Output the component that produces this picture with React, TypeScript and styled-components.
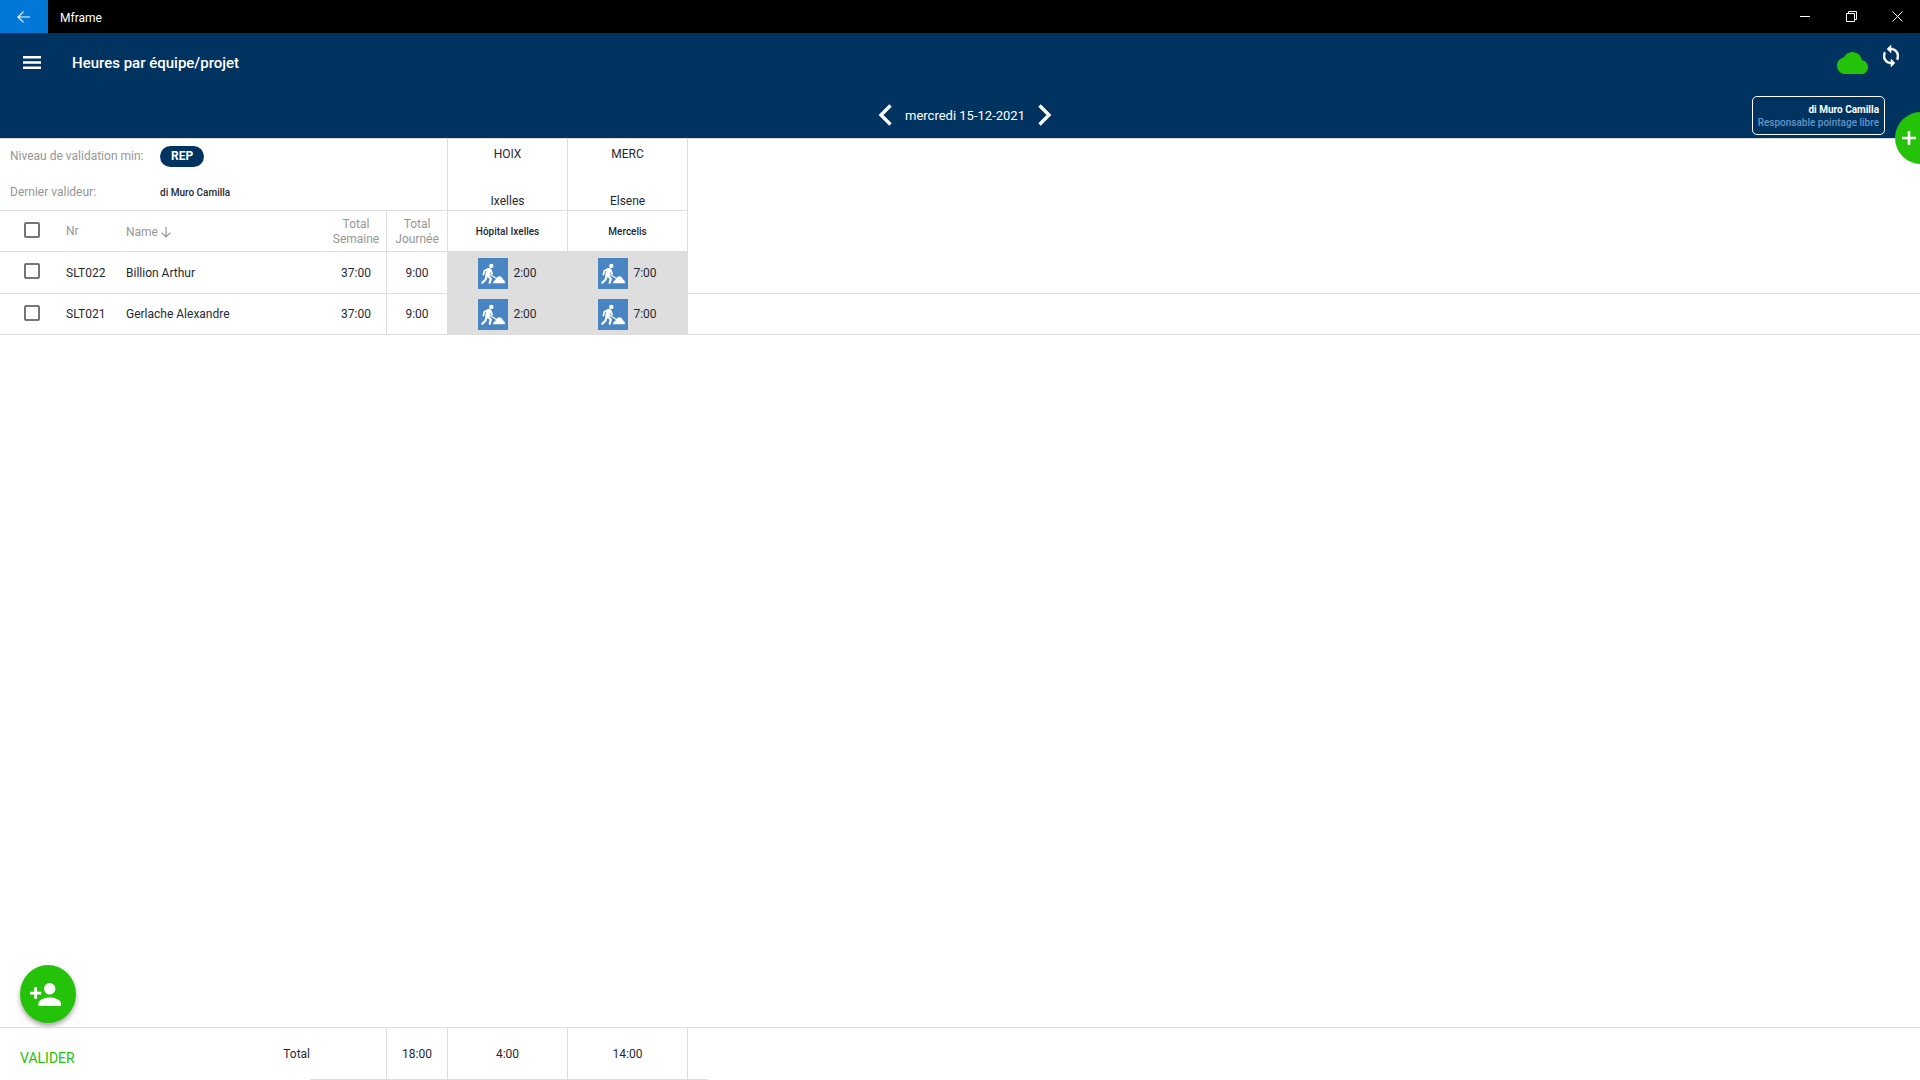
import React from 'react';
import styled, { createGlobalStyle } from 'styled-components';

const navy = '#00335f';
const green = '#25c20a';
const line = '#dedede';
const grey = '#969696';
const ink = '#1f2933';

const GlobalStyle = createGlobalStyle`
  * { box-sizing: border-box; }
  body { margin: 0; background: #fff; color: ${ink}; font: 12px/15px Roboto, "Noto Sans", sans-serif; }
  button { border: 0; padding: 0; margin: 0; background: none; color: inherit; font: inherit; cursor: pointer; }
`;

const Page = styled.div`
  min-height: 100vh;
  display: flex;
  flex-direction: column;
  overflow-x: hidden;
`;

const TitleBar = styled.div`
  height: 33px;
  display: flex;
  align-items: center;
  background: #000;
  color: #fff;
`;

const BackButton = styled.button`
  width: 48px;
  height: 33px;
  display: grid;
  place-items: center;
  background: #0178d7;
`;

const AppName = styled.span`
  flex: 1;
  padding: 3px 12px 0;
`;

const WindowButton = styled.button`
  width: 46px;
  height: 33px;
  display: grid;
  place-items: center;
`;

const Header = styled.header`
  position: relative;
  height: 105px;
  display: flex;
  flex-direction: column;
  background: ${navy};
  color: #fff;
`;

const HeaderRow = styled.div`
  height: 58px;
  display: flex;
  align-items: center;
  padding-right: 21px;
`;

const MenuButton = styled.button`
  width: 64px;
  height: 58px;
  display: grid;
  place-items: center;
`;

const Title = styled.h1`
  flex: 1;
  margin: 0;
  padding: 2px 0 0 8px;
  font-size: 15px;
  line-height: 20px;
  font-weight: 500;
`;

const HeaderIcons = styled.div`
  height: 34px;
  display: flex;
  align-items: flex-start;
  gap: 15px;
`;

const CloudMark = styled.span`
  display: block;
  padding-top: 7px;
  svg { display: block; }
`;

const IconButton = styled.button`
  display: block;
  svg { display: block; }
`;

const DateRow = styled.div`
  height: 47px;
  padding: 1px 35px 0 0;
  display: grid;
  grid-template-columns: 1fr auto 1fr;
  align-items: center;
`;

const DatePicker = styled.div`
  grid-column: 2;
  display: flex;
  align-items: center;
  gap: 13px;
  padding-left: 45px;
  font-size: 13px;
`;

const UserBox = styled.div`
  grid-column: 3;
  justify-self: end;
  padding: 6px 5px 5px;
  border: 1px solid #fff;
  border-radius: 5px;
  text-align: right;
  font-size: 10px;
  line-height: 13px;
  font-weight: 500;
  color: #6294c6;
`;

const UserName = styled.div`
  color: #fff;
  font-weight: 700;
`;

const AddButton = styled.button`
  position: absolute;
  right: -27px;
  bottom: -26px;
  width: 52px;
  height: 52px;
  padding-left: 4px;
  border-radius: 50%;
  background: ${green};
  z-index: 2;
  svg { display: block; }
`;

const Main = styled.main`
  flex: 1;
  display: flex;
  flex-direction: column;
`;

const HoursTable = styled.table`
  width: 100%;
  table-layout: fixed;
  border-collapse: separate;
  border-spacing: 0;
  border-top: 1px solid ${line};
`;

const Col = styled.col<{ $w?: number }>`
  width: ${p => (p.$w ? `${p.$w}px` : 'auto')};
`;

const Row = styled.tr<{ $h: number }>`
  height: ${p => p.$h}px;
`;

type CellProps = { $align?: string; $right?: boolean; $bottom?: boolean; $muted?: boolean; $filled?: boolean };

const cell = (p: CellProps) => `
  padding: 1px 0 0;
  font-weight: 400;
  text-align: ${p.$align || 'left'};
  border-right: 1px solid ${p.$right ? line : 'transparent'};
  border-bottom: 1px solid ${p.$bottom === false ? 'transparent' : line};
  color: ${p.$muted ? grey : ink};
  background: ${p.$filled ? line : 'transparent'};
`;

const Th = styled.th<CellProps>`${cell}`;
const Td = styled.td<CellProps>`${cell}`;

const Summary = styled.dl`
  height: 70px;
  margin: 0;
  padding: 5px 10px 0;
  display: grid;
  grid-template-columns: 150px 1fr;
  grid-template-rows: 22px 22px;
  row-gap: 14px;
  align-items: center;
`;

const Term = styled.dt`
  padding-top: 1px;
  color: ${grey};
`;

const Value = styled.dd`
  margin: 0;
  font-size: 10px;
  font-weight: 500;
`;

const Level = styled.span`
  display: inline-block;
  padding: 0 11px;
  border-radius: 11px;
  background: ${navy};
  color: #fff;
  font-size: 12px;
  line-height: 21px;
  font-weight: 700;
`;

const Project = styled.div`
  height: 70px;
  padding: 7px 0 1px;
  display: flex;
  flex-direction: column;
  justify-content: space-between;
`;

const Site = styled.span`
  font-size: 10px;
  font-weight: 500;
`;

const Check = styled.input`
  appearance: none;
  display: block;
  width: 16px;
  height: 16px;
  margin: 0 0 4px 24px;
  border: 2px solid #757575;
  border-radius: 2px;
  background: #fff;
  &:checked { background: ${green}; }
`;

const SortButton = styled.button`
  display: flex;
  align-items: center;
  gap: 3px;
  padding-top: 1px;
`;

const Work = styled.div`
  display: flex;
  align-items: center;
  justify-content: center;
  gap: 5px;
  svg { display: block; }
`;

const FabBar = styled.div`
  margin-top: auto;
  padding: 0 20px 4px;
`;

const Fab = styled.button`
  width: 56px;
  height: 58px;
  padding-right: 5px;
  display: grid;
  place-items: center;
  border-radius: 50%;
  background: ${green};
  box-shadow: 0 3px 5px rgba(0, 0, 0, 0.35);
`;

const Footer = styled.footer`
  height: 53px;
  display: flex;
  border-top: 1px solid ${line};
`;

const ValidateArea = styled.div`
  width: 310px;
  padding-left: 20px;
  display: flex;
  justify-content: space-between;
  align-items: center;
`;

const ValidateButton = styled.button`
  padding-top: 8px;
  color: ${green};
  font-size: 14px;
  line-height: 18px;
`;

const Totals = styled.div`
  display: flex;
  border-bottom: 1px solid ${line};
  padding-right: 20px;
`;

const Total = styled.output<{ $w: number }>`
  width: ${p => p.$w}px;
  padding-top: 1px;
  display: grid;
  place-items: center;
  border-right: 1px solid ${line};
`;

const WorkerIcon = () => (
  <svg width="30" height="31" viewBox="0 0 30 31" role="img" aria-label="Chantier">
    <rect width="30" height="31" fill="#4985c3" />
    <g fill="none" stroke="#fff" strokeLinecap="round" strokeLinejoin="round">
      <path d="M10.800 12 9.400 17" strokeWidth="4.400" />
      <path d="M10 11 6.400 12.800 5.400 16.600" strokeWidth="1.800" />
      <path d="M8.600 18 7.600 21.500 4.300 24.800" strokeWidth="2.200" />
      <path d="M10 17.500 12.800 20.800 11.700 24.800" strokeWidth="2.200" />
      <path d="M12.400 11.500 14 15.600" strokeWidth="2" />
      <path d="M8.200 14 18.500 20.600" strokeWidth="1.200" />
    </g>
    <circle cx="13.300" cy="7.900" r="2.200" fill="#fff" />
    <path d="M14.800 25.300Q15.800 22.600 17.600 21.600 19 18.200 21.600 18.200 24 18.200 24.800 21 27 22.400 27.200 25.300z" fill="#fff" />
  </svg>
);

const projects = [
  { code: 'HOIX', city: 'Ixelles', site: 'Hôpital Ixelles', total: '4:00' },
  { code: 'MERC', city: 'Elsene', site: 'Mercelis', total: '14:00' },
];

const people = [
  { nr: 'SLT022', name: 'Billion Arthur', week: '37:00', day: '9:00', hours: ['2:00', '7:00'], h: 42 },
  { nr: 'SLT021', name: 'Gerlache Alexandre', week: '37:00', day: '9:00', hours: ['2:00', '7:00'], h: 41 },
];

export default function App() {
  return (
    <Page>
      <GlobalStyle />
      <TitleBar>
        <BackButton aria-label="Retour">
          <svg width="14" height="12" viewBox="0 0 14 12" fill="none" stroke="#fff" strokeWidth="1.2"><path d="M13 6H1M6.500.6 1 6l5.500 5.400" /></svg>
        </BackButton>
        <AppName>Mframe</AppName>
        <WindowButton aria-label="Réduire">
          <svg width="10" height="10" viewBox="0 0 10 10" stroke="#fff"><path d="M0 4.500h10" /></svg>
        </WindowButton>
        <WindowButton aria-label="Restaurer">
          <svg width="11" height="11" viewBox="0 0 11 11" fill="none" stroke="#fff"><path d="M.5 2.500h8v8h-8zM2.500 2.500v-2h8v8h-2" /></svg>
        </WindowButton>
        <WindowButton aria-label="Fermer">
          <svg width="11" height="11" viewBox="0 0 11 11" fill="none" stroke="#fff"><path d="m.5.5 10 10M10.500.5l-10 10" /></svg>
        </WindowButton>
      </TitleBar>

      <Header>
        <HeaderRow>
          <MenuButton aria-label="Menu">
            <svg width="18" height="13" viewBox="0 0 18 13" fill="#fff"><path d="M0 0h18v2.500H0zM0 5.250h18v2.500H0zM0 10.500h18V13H0z" /></svg>
          </MenuButton>
          <Title>Heures par équipe/projet</Title>
          <HeaderIcons>
            <CloudMark>
              <svg width="31" height="22" viewBox="0 4 24 16" preserveAspectRatio="none" fill={green} role="img" aria-label="Connecté"><path d="M19.350 10.040C18.670 6.590 15.640 4 12 4 9.110 4 6.600 5.640 5.350 8.040 2.340 8.360 0 10.910 0 14c0 3.310 2.690 6 6 6h13c2.760 0 5-2.240 5-5 0-2.640-2.050-4.780-4.650-4.960z" /></svg>
            </CloudMark>
            <IconButton aria-label="Synchroniser">
              <svg width="16" height="22" viewBox="4 1 16 22" fill="#fff" stroke="#fff" strokeWidth=".5"><path d="M12 4V1L8 5l4 4V6c3.310 0 6 2.690 6 6 0 1.010-.25 1.970-.7 2.800l1.460 1.460C19.540 15.030 20 13.570 20 12c0-4.420-3.580-8-8-8zm0 14c-3.310 0-6-2.690-6-6 0-1.010.25-1.970.7-2.800L5.240 7.740C4.460 8.970 4 10.430 4 12c0 4.420 3.580 8 8 8v3l4-4-4-4v3z" /></svg>
            </IconButton>
          </HeaderIcons>
        </HeaderRow>
        <DateRow>
          <DatePicker>
            <IconButton aria-label="Jour précédent">
              <svg width="14" height="22" viewBox="0 0 14 22" fill="none" stroke="#fff" strokeWidth="3.400"><path d="M12.500 1.500 3 11l9.500 9.500" /></svg>
            </IconButton>
            <span>mercredi 15-12-2021</span>
            <IconButton aria-label="Jour suivant">
              <svg width="14" height="22" viewBox="0 0 14 22" fill="none" stroke="#fff" strokeWidth="3.400"><path d="M1.500 1.500 11 11l-9.500 9.500" /></svg>
            </IconButton>
          </DatePicker>
          <UserBox>
            <UserName>di Muro Camilla</UserName>
            Responsable pointage libre
          </UserBox>
        </DateRow>
        <AddButton aria-label="Ajouter">
          <svg width="20" height="14" viewBox="0 0 20 14" fill="#fff"><path d="M8.700 0h2.600v5.700H17v2.600h-5.700V14H8.700V8.300H3V5.700h5.700z" /></svg>
        </AddButton>
      </Header>

      <Main>
        <HoursTable>
          <colgroup>
            <Col $w={66} /><Col $w={60} /><Col $w={200} /><Col $w={61} /><Col $w={61} /><Col $w={120} /><Col $w={120} /><Col />
          </colgroup>
          <thead>
            <Row $h={72}>
              <Td colSpan={5} $right>
                <Summary>
                  <Term>Niveau de validation min:</Term>
                  <Value><Level>REP</Level></Value>
                  <Term>Dernier valideur:</Term>
                  <Value>di Muro Camilla</Value>
                </Summary>
              </Td>
              {projects.map(p => (
                <Th key={p.code} $align="center" $right>
                  <Project><span>{p.code}</span><span>{p.city}</span></Project>
                </Th>
              ))}
              <Td $bottom={false} />
            </Row>
            <Row $h={41}>
              <Th><Check type="checkbox" aria-label="Tout sélectionner" /></Th>
              <Th $muted>Nr</Th>
              <Th $muted>
                <SortButton>
                  Name
                  <svg width="10" height="11" viewBox="0 0 10 11" fill="none" stroke={grey} strokeWidth="1.200"><path d="M5 0v10M.6 5.600 5 10l4.400-4.400" /></svg>
                </SortButton>
              </Th>
              <Th $muted $align="center" $right>Total<br />Semaine</Th>
              <Th $muted $align="center" $right>Total<br />Journée</Th>
              {projects.map(p => <Th key={p.code} $align="center" $right><Site>{p.site}</Site></Th>)}
              <Td $bottom={false} />
            </Row>
          </thead>
          <tbody>
            {people.map(p => (
              <Row key={p.nr} $h={p.h}>
                <Td><Check type="checkbox" aria-label={p.name} /></Td>
                <Td>{p.nr}</Td>
                <Td>{p.name}</Td>
                <Td $align="center" $right>{p.week}</Td>
                <Td $align="center" $right>{p.day}</Td>
                {p.hours.map((h, i) => (
                  <Td key={i} $filled $right><Work><WorkerIcon />{h}</Work></Td>
                ))}
                <Td />
              </Row>
            ))}
          </tbody>
        </HoursTable>
        <FabBar>
          <Fab aria-label="Ajouter une personne">
            <svg width="31" height="23" viewBox="1 4 22 16" preserveAspectRatio="none" fill="#fff"><path d="M15 12c2.210 0 4-1.790 4-4s-1.790-4-4-4-4 1.790-4 4 1.790 4 4 4zm-9-2V7H4v3H1v2h3v3h2v-3h3v-2H6zm9 4c-2.670 0-8 1.340-8 4v2h16v-2c0-2.660-5.330-4-8-4z" /></svg>
          </Fab>
        </FabBar>
      </Main>

      <Footer>
        <ValidateArea>
          <ValidateButton>VALIDER</ValidateButton>
          <span>Total</span>
        </ValidateArea>
        <Totals>
          <Total $w={77} />
          <Total $w={61}>18:00</Total>
          {projects.map(p => <Total key={p.code} $w={120}>{p.total}</Total>)}
        </Totals>
      </Footer>
    </Page>
  );
}
